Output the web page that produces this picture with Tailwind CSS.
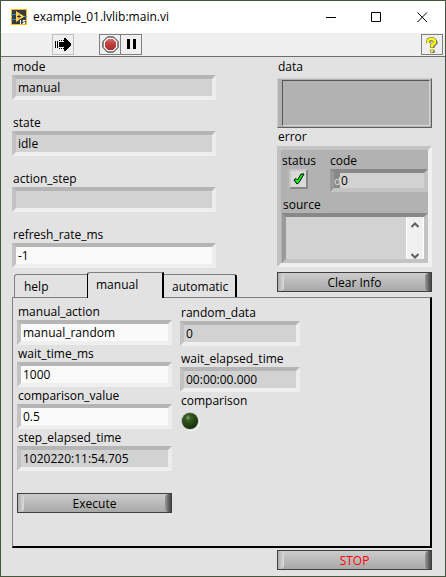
<!DOCTYPE html>
<html lang="en">
<head>
<meta charset="utf-8">
<meta name="viewport" content="width=device-width, initial-scale=1">
<title>example_01.lvlib:main.vi</title>
<script src="https://cdn.jsdelivr.net/npm/@tailwindcss/browser@4"></script>
</head>
<body class="flex min-h-screen flex-col border border-[#45563f] bg-[#e2e2e2] font-['Open_Sans','Noto_Sans',sans-serif] text-[12px] leading-[17px] text-black">
<header class="flex h-8 items-center bg-white pl-[10px]">
  <svg class="h-4 w-4" viewBox="0 0 16 16" aria-hidden="true"><path d="M0 0h16v16H0z" fill="#f5bd18"/><path d="M1 1h14v14H1z" fill="#3a3a3a"/><path d="M0 5.500h5M0 10.500h5M13 7.500h3" stroke="#2f8fd0"/><path d="M5 2v11l8.500-5.500z" fill="#ffd65a"/><path d="M6 7.500h4M8 5.500v4" stroke="#333"/><path d="M8.500 10h6.500v5H8.500z" fill="#3a3a3a"/><path d="M9.500 11v4M14.500 11.500h-2.500v1.500h2v1.500h-2.500" stroke="#fff" fill="none"/></svg>
  <h1 class="ml-[6px] flex-1 pb-px">example_01.lvlib:main.vi</h1>
  <button aria-label="Minimize" class="grid h-8 w-[46px] place-items-center"><svg class="h-[11px] w-[11px]" viewBox="0 0 11 11"><path d="M0 5.500h10" stroke="#000"/></svg></button>
  <button aria-label="Maximize" class="grid h-8 w-[45px] place-items-center"><svg class="h-[11px] w-[11px]" viewBox="0 0 11 11"><path d="M.5.5h9v9h-9z" fill="none" stroke="#000"/></svg></button>
  <button aria-label="Close" class="grid h-8 w-[46px] place-items-center"><svg class="h-[11px] w-[11px]" viewBox="0 0 11 11"><path d="M.5.5l9.500 9.500M10 .5L.5 10" stroke="#000"/></svg></button>
</header>
<div role="toolbar" aria-label="Run controls" class="flex h-6 items-start border-b border-[#706c70] bg-[#efefef] pt-px pl-[51px] pr-[2px]">
  <button aria-label="Running" class="grid h-[21px] w-[22px] place-items-center border border-[#c0c0c0]"><svg class="h-[13px] w-4" viewBox="0 0 16 13" shape-rendering="crispEdges"><path d="M0 4h1v5H0zM2 4h1v5H2zM4 4h5V0h1l6 6v1l-6 6H9V9H4z"/><path d="M0 3.500h4M0 9.500h4M4 2.500h5M4 10.500h5" stroke="#000" stroke-dasharray="1 1"/></svg></button>
  <button aria-label="Abort" class="ml-[25px] grid h-[21px] w-[22px] place-items-center border border-[#808080]"><svg class="h-[17px] w-[17px]" viewBox="0 0 17 17"><defs><linearGradient id="red" x2="0" y2="1"><stop stop-color="#d96a6a"/><stop offset=".45" stop-color="#c33e3e"/><stop offset="1" stop-color="#a52e2e"/></linearGradient></defs><path d="M5.500 1h6L16 5.500v6L11.500 16h-6L1 11.500v-6z" fill="#fff" stroke="#111"/><path d="M6 3h5l3 3v5l-3 3H6l-3-3V6z" fill="url(#red)"/></svg></button>
  <button aria-label="Pause" class="-ml-px grid h-[21px] w-[22px] place-items-center border border-[#808080]"><svg class="h-[11px] w-[11px]" viewBox="0 0 11 11"><path d="M1 0h3v10H1zM7 0h3v10H7z"/></svg></button>
  <button aria-label="Help" class="ml-auto grid h-[21px] w-[22px] place-items-center border border-[#808080]"><svg class="h-4 w-3" viewBox="0 0 12 16"><path d="M3.500 6V5Q3.500 3 6.500 3T10.500 5.500Q10.500 7 7.500 8.500V11M7.500 13v3" fill="none" stroke="#999" stroke-width="3"/><path d="M2 6V4.500Q2 2 5.500 2T9 5Q9 6.500 6 8v3M6 12.500v3" fill="none" stroke="#555" stroke-width="3.500"/><path d="M2 6V4.500Q2 2 5.500 2T9 5Q9 6.500 6 8v2.500M6 12.500v2.500" fill="none" stroke="#ff0" stroke-width="2.500"/></svg></button>
</div>
<main class="flex flex-1 flex-col pr-[13px] pl-[11px]">
  <div class="flex justify-between">
    <div class="flex flex-col">
      <div class="flex w-[204px] flex-col gap-[14px] pt-px">
        <div class="flex flex-col"><label for="mode" class="pl-px">mode</label><input id="mode" readonly value="manual" class="h-[25px] w-full border-4 border-t-[#b5b5b5] border-r-[#ececec] border-b-[#efefef] border-l-[#c2c2c2] bg-[#d2d2d2] px-[2px] outline-none"></div>
        <div class="flex flex-col"><label for="state" class="pl-px">state</label><input id="state" readonly value="idle" class="h-[25px] w-full border-4 border-t-[#b5b5b5] border-r-[#ececec] border-b-[#efefef] border-l-[#c2c2c2] bg-[#d2d2d2] px-[2px] outline-none"></div>
        <div class="flex flex-col"><label for="step" class="pl-px">action_step</label><input id="step" readonly value="" class="h-[25px] w-full border-4 border-t-[#b5b5b5] border-r-[#ececec] border-b-[#efefef] border-l-[#c2c2c2] bg-[#d2d2d2] px-[2px] outline-none"></div>
        <div class="flex flex-col"><label for="refresh" class="pl-px">refresh_rate_ms</label><input id="refresh" value="-1" class="h-[25px] w-full border-4 border-t-[#b5b5b5] border-r-[#ececec] border-b-[#efefef] border-l-[#c2c2c2] bg-[#fafafa] px-[2px] outline-none"></div>
      </div>
      <div role="tablist" class="mt-auto ml-[2px] flex items-end">
        <button role="tab" aria-selected="false" class="h-[23px] w-[73px] rounded-tl-[3px] border-t border-l border-[#808080] pl-[9px] text-left">help</button>
        <button role="tab" aria-selected="true" class="relative z-10 -mb-px h-[26px] w-[77px] rounded-tl-[3px] border-t border-r-2 border-l border-t-[#808080] border-r-black border-l-black bg-[#e2e2e2] pb-[2px] pl-[8px] text-left">manual</button>
        <button role="tab" aria-selected="false" class="h-[23px] w-[73px] rounded-tr-[3px] border-t border-r-2 border-t-[#808080] border-r-black pl-[8px] text-left">automatic</button>
      </div>
    </div>
    <div class="flex w-[155px] flex-col pt-px pb-[5px]">
      <h2 class="pl-px">data</h2>
      <div class="mt-[3px] h-[50px] border border-t-[#cfcfcf] border-r-[#606060] border-b-[#606060] border-l-[#cfcfcf] bg-[#b2b2b2] pt-px pr-px pb-px pl-[4px]"><div class="h-full border border-t-[#555] border-r-[#d8d8d8] border-b-[#d8d8d8] border-l-[#555]"></div></div>
      <h2 class="pl-px">error</h2>
      <section aria-label="error" class="mt-px h-[121px] border-4 border-t-[#c4c4c4] border-r-[#f0f0f0] border-b-[#efefef] border-l-[#c0c0c0] bg-[#b2b2b2] pt-[2px] pl-px">
        <div class="flex">
          <div class="flex w-[48px] flex-col"><label for="status">status</label>
            <button id="status" class="ml-[7px] grid h-[20px] w-[19px] place-items-center border-2 border-t-[#c6c6c6] border-r-[#888] border-b-[#888] border-l-[#c6c6c6] bg-[#d9d9d9]"><svg class="h-3 w-3" viewBox="0 0 12 12"><path d="M1 7l2-1.500 1.500 1.500L8 1h3L6 9.500 4 11z" fill="#0f0" stroke="#000"/></svg></button></div>
          <div class="flex flex-1 flex-col"><label for="code">code</label>
            <div class="flex h-[23px] border-4 border-t-[#888] border-r-[#c4c4c4] border-b-[#c4c4c4] border-l-[#999] bg-[#d2d2d2]"><span class="w-[6px] shrink-0 bg-[#888] text-[11px] leading-[15px] text-[#ddd]">d</span><input id="code" readonly value="0" class="h-full w-full min-w-0 pl-px outline-none"></div></div>
        </div>
        <label for="source" class="mt-[4px] block pl-px">source</label>
        <div class="flex h-[50px] border-4 border-t-[#888] border-r-[#c4c4c4] border-b-[#c4c4c4] border-l-[#999] bg-[#d2d2d2]">
          <textarea id="source" readonly class="h-full min-w-0 flex-1 resize-none overflow-hidden outline-none"></textarea>
          <div class="flex w-[18px] flex-col justify-between border-x border-white bg-[#f0f0f0] pt-[5px]">
            <button aria-label="Scroll up" class="grid place-items-center"><svg class="h-[6px] w-[8px]" viewBox="0 0 8 6"><path d="M.5 5L4 1.500 7.500 5" fill="none" stroke="#606060" stroke-width="2"/></svg></button>
            <button aria-label="Scroll down" class="grid place-items-center"><svg class="h-[6px] w-[8px]" viewBox="0 0 8 6"><path d="M.5 1L4 4.500 7.500 1" fill="none" stroke="#606060" stroke-width="2"/></svg></button>
          </div>
        </div>
      </section>
      <button class="mt-[5px] flex h-[20px] items-stretch justify-between border border-[#404040] bg-linear-to-b from-[#cdcdcd] to-[#a8a8a8]"><span class="w-[6px] rounded-r-[4px] bg-linear-to-r from-[#adadad] to-[#dcdcdc]"></span><span class="self-center">Clear Info</span><span class="w-[6px] rounded-l-[4px] bg-linear-to-r from-[#999] to-[#444]"></span></button>
    </div>
  </div>
  <section role="tabpanel" aria-label="manual" class="flex h-[251px] gap-[8px] border-t border-r-2 border-b-2 border-l border-t-[#808080] border-r-black border-b-black border-l-[#808080] pt-[5px] pl-[4px]">
    <div class="flex w-[155px] flex-col">
      <label for="action" class="pl-px">manual_action</label><input id="action" value="manual_random" class="h-[25px] border-4 border-t-[#b5b5b5] border-r-[#ececec] border-b-[#efefef] border-l-[#c2c2c2] bg-[#fafafa] px-[2px] outline-none">
      <label for="wait" class="pl-px">wait_time_ms</label><input id="wait" value="1000" class="h-[25px] border-4 border-t-[#b5b5b5] border-r-[#ececec] border-b-[#efefef] border-l-[#c2c2c2] bg-[#fafafa] px-[2px] outline-none">
      <label for="cmp" class="pl-px">comparison_value</label><input id="cmp" value="0.5" class="h-[25px] border-4 border-t-[#b5b5b5] border-r-[#ececec] border-b-[#efefef] border-l-[#c2c2c2] bg-[#fafafa] px-[2px] outline-none">
      <label for="elapsed" class="pl-px">step_elapsed_time</label><input id="elapsed" readonly value="1020220:11:54.705" class="h-[25px] border-4 border-t-[#b5b5b5] border-r-[#ececec] border-b-[#efefef] border-l-[#c2c2c2] bg-[#d2d2d2] px-[2px] outline-none">
      <button class="mt-[22px] flex h-[20px] items-stretch justify-between border border-[#404040] bg-linear-to-b from-[#cdcdcd] to-[#a8a8a8]"><span class="w-[6px] rounded-r-[4px] bg-linear-to-r from-[#adadad] to-[#dcdcdc]"></span><span class="self-center">Execute</span><span class="w-[6px] rounded-l-[4px] bg-linear-to-r from-[#999] to-[#444]"></span></button>
    </div>
    <div class="flex w-[120px] flex-col pt-px">
      <label for="random" class="pl-px">random_data</label><input id="random" readonly value="0" class="h-[25px] border-4 border-t-[#b5b5b5] border-r-[#ececec] border-b-[#efefef] border-l-[#c2c2c2] bg-[#d2d2d2] px-[2px] outline-none">
      <label for="waited" class="mt-[4px] pl-px">wait_elapsed_time</label><input id="waited" readonly value="00:00:00.000" class="h-[25px] border-4 border-t-[#b5b5b5] border-r-[#ececec] border-b-[#efefef] border-l-[#c2c2c2] bg-[#d2d2d2] px-[2px] outline-none">
      <span class="pl-px">comparison</span>
      <svg role="img" aria-label="comparison: off" class="mt-[2px] h-5 w-5" viewBox="0 0 20 20"><defs><radialGradient id="led" cx=".38" cy=".3" r=".7"><stop stop-color="#8ba07c"/><stop offset=".25" stop-color="#365a20"/><stop offset="1" stop-color="#153008"/></radialGradient></defs><circle cx="11" cy="11" r="9" fill="#fafafa"/><circle cx="10" cy="10" r="9" fill="#bcbcbc"/><circle cx="10" cy="10" r="8" fill="url(#led)"/></svg>
    </div>
  </section>
  <button class="mt-[2px] flex h-[20px] w-[155px] items-stretch justify-between self-end border border-[#404040] bg-linear-to-b from-[#cdcdcd] to-[#a8a8a8] text-[#f00]"><span class="w-[6px] rounded-r-[4px] bg-linear-to-r from-[#adadad] to-[#dcdcdc]"></span><span class="self-center">STOP</span><span class="w-[6px] rounded-l-[4px] bg-linear-to-r from-[#999] to-[#444]"></span></button>
</main>
</body>
</html>
